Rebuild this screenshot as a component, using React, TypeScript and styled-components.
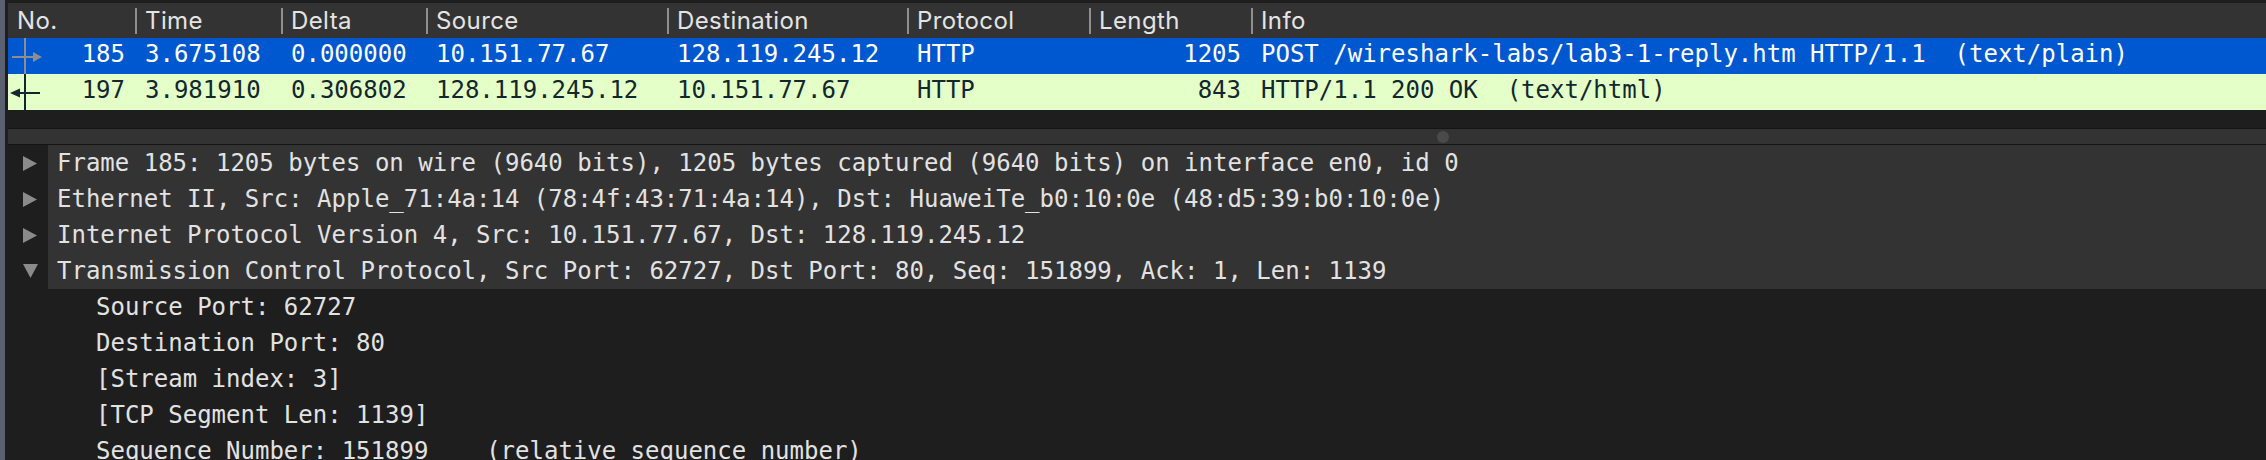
import React from "react";
import styled, { createGlobalStyle } from "styled-components";

const MONO = `"DejaVu Sans Mono", "Liberation Mono", monospace`;
const SANS = `Inter, "Noto Sans", "Liberation Sans", sans-serif`;

const GlobalStyle = createGlobalStyle`
  html, body { margin: 0; padding: 0; background: #1e1e1e; }
  body { width: 2266px; height: 460px; overflow: hidden; }
`;

const Window = styled.div`
  display: flex;
  width: 2266px;
  height: 460px;
  overflow: hidden;
  background: #1e1e1e;
`;

const DesktopEdge = styled.div`
  flex: 0 0 5px;
  background: #5b6170;
`;

const Main = styled.div`
  flex: 1;
  min-width: 0;
  margin-left: 3px;
  padding-top: 3px;
  display: block;
  overflow: hidden;
`;

const COLS = "127px 146px 145px 241px 240px 182px 162px 1fr";

const Header = styled.div`
  display: grid;
  grid-template-columns: ${COLS};
  height: 35px;
  background: #333333;
  font-family: ${SANS};
  font-size: 24px;
  letter-spacing: 0.4px;
  line-height: 35px;
  color: #e4e4e4;
`;

const HeaderCell = styled.div<{ $first?: boolean }>`
  display: flex;
  align-items: center;
  gap: 8px;
  padding-left: ${(p) => (p.$first ? "9px" : "0")};
  white-space: nowrap;
  overflow: hidden;
`;

const HeaderSep = styled.span`
  flex: 0 0 2px;
  height: 26px;
  background: #8f8f8f;
`;

const PacketRow = styled.div<{ $bg: string; $fg: string }>`
  display: grid;
  grid-template-columns: ${COLS};
  height: 36px;
  background: ${(p) => p.$bg};
  color: ${(p) => p.$fg};
  font-family: ${MONO};
  font-size: 24px;
  line-height: 32px;
`;

const Cell = styled.div<{ $right?: boolean }>`
  padding: 0 10px;
  white-space: pre;
  overflow: hidden;
  text-align: ${(p) => (p.$right ? "right" : "left")};
`;

const NoCell = styled.div`
  display: flex;
  align-items: flex-start;
  padding-right: 10px;
  overflow: hidden;
`;

const NoText = styled.span`
  margin-left: auto;
`;

const RelMark = styled.svg`
  flex: 0 0 36px;
  display: block;
`;

const EmptyList = styled.div`
  height: 18px;
  background: #1e1e1e;
`;

const Splitter = styled.div`
  height: 15px;
  background: #333333;
  border-top: 1px solid #141414;
  border-bottom: 1px solid #141414;
  display: flex;
  align-items: center;
  padding-left: 1429px;
`;

const Grip = styled.span`
  width: 12px;
  height: 12px;
  border-radius: 50%;
  background: #4a4a4a;
`;

const Tree = styled.div`
  display: flex;
  flex-direction: column;
  font-family: ${MONO};
  font-size: 24px;
  line-height: 36px;
  color: #e2e2e2;
`;

const TreeRow = styled.div`
  display: flex;
  flex: 0 0 36px;
  height: 36px;
`;

const Expander = styled.div`
  flex: 0 0 40px;
  display: flex;
  align-items: center;
  padding-left: 15px;
  box-sizing: border-box;
  background: #1e1e1e;
`;

const TreeLabel = styled.div<{ $top: boolean }>`
  flex: 1;
  min-width: 0;
  white-space: pre;
  overflow: hidden;
  padding-left: ${(p) => (p.$top ? "9px" : "48px")};
  background: ${(p) => (p.$top ? "#333333" : "#1e1e1e")};
`;

const Triangle: React.FC<{ open?: boolean }> = ({ open }) =>
  open ? (
    <svg width="15" height="14" viewBox="0 0 15 14">
      <polygon points="0,0 15,0 7.5,14" fill="#8b8b8b" />
    </svg>
  ) : (
    <svg width="14" height="15" viewBox="0 0 14 15">
      <polygon points="0,0 14,7.5 0,15" fill="#8b8b8b" />
    </svg>
  );

type Packet = {
  no: string;
  time: string;
  delta: string;
  src: string;
  dst: string;
  proto: string;
  len: string;
  info: string;
  selected: boolean;
};

const packets: Packet[] = [
  {
    no: "185",
    time: "3.675108",
    delta: "0.000000",
    src: "10.151.77.67",
    dst: "128.119.245.12",
    proto: "HTTP",
    len: "1205",
    info: "POST /wireshark-labs/lab3-1-reply.htm HTTP/1.1  (text/plain)",
    selected: true,
  },
  {
    no: "197",
    time: "3.981910",
    delta: "0.306802",
    src: "128.119.245.12",
    dst: "10.151.77.67",
    proto: "HTTP",
    len: "843",
    info: "HTTP/1.1 200 OK  (text/html)",
    selected: false,
  },
];

const Relation: React.FC<{ request: boolean }> = ({ request }) => {
  const c = request ? "#8e8e8e" : "#12272e";
  return (
    <RelMark width="36" height="36" viewBox="0 0 36 36">
      <rect x="16" y="0" width="2" height="36" fill={c} />
      {request ? (
        <>
          <rect x="4" y="18" width="22" height="2" fill={c} />
          <polygon points="25,14 34,19 25,24" fill={c} />
        </>
      ) : (
        <>
          <rect x="10" y="18" width="22" height="2" fill={c} />
          <polygon points="2,19 12,14.5 12,23.5" fill={c} />
        </>
      )}
    </RelMark>
  );
};

const headers = ["No.", "Time", "Delta", "Source", "Destination", "Protocol", "Length", "Info"];

const tree: { text: string; top: boolean; open?: boolean }[] = [
  {
    text: "Frame 185: 1205 bytes on wire (9640 bits), 1205 bytes captured (9640 bits) on interface en0, id 0",
    top: true,
  },
  {
    text: "Ethernet II, Src: Apple_71:4a:14 (78:4f:43:71:4a:14), Dst: HuaweiTe_b0:10:0e (48:d5:39:b0:10:0e)",
    top: true,
  },
  { text: "Internet Protocol Version 4, Src: 10.151.77.67, Dst: 128.119.245.12", top: true },
  {
    text: "Transmission Control Protocol, Src Port: 62727, Dst Port: 80, Seq: 151899, Ack: 1, Len: 1139",
    top: true,
    open: true,
  },
  { text: "Source Port: 62727", top: false },
  { text: "Destination Port: 80", top: false },
  { text: "[Stream index: 3]", top: false },
  { text: "[TCP Segment Len: 1139]", top: false },
  { text: "Sequence Number: 151899    (relative sequence number)", top: false },
];

export default function App() {
  return (
    <>
      <GlobalStyle />
      <Window>
        <DesktopEdge />
        <Main>
          <Header>
            {headers.map((h, i) => (
              <HeaderCell key={h} $first={i === 0}>
                {i > 0 && <HeaderSep />}
                <span>{h}</span>
              </HeaderCell>
            ))}
          </Header>
          {packets.map((p) => (
            <PacketRow
              key={p.no}
              $bg={p.selected ? "#0058d0" : "#e4ffc7"}
              $fg={p.selected ? "#ffffff" : "#12272e"}
            >
              <NoCell>
                <Relation request={p.selected} />
                <NoText>{p.no}</NoText>
              </NoCell>
              <Cell>{p.time}</Cell>
              <Cell>{p.delta}</Cell>
              <Cell>{p.src}</Cell>
              <Cell>{p.dst}</Cell>
              <Cell>{p.proto}</Cell>
              <Cell $right>{p.len}</Cell>
              <Cell>{p.info}</Cell>
            </PacketRow>
          ))}
          <EmptyList />
          <Splitter>
            <Grip />
          </Splitter>
          <Tree>
            {tree.map((t, i) => (
              <TreeRow key={i}>
                <Expander>{t.top && <Triangle open={t.open} />}</Expander>
                <TreeLabel $top={t.top}>{t.text}</TreeLabel>
              </TreeRow>
            ))}
          </Tree>
        </Main>
      </Window>
    </>
  );
}
